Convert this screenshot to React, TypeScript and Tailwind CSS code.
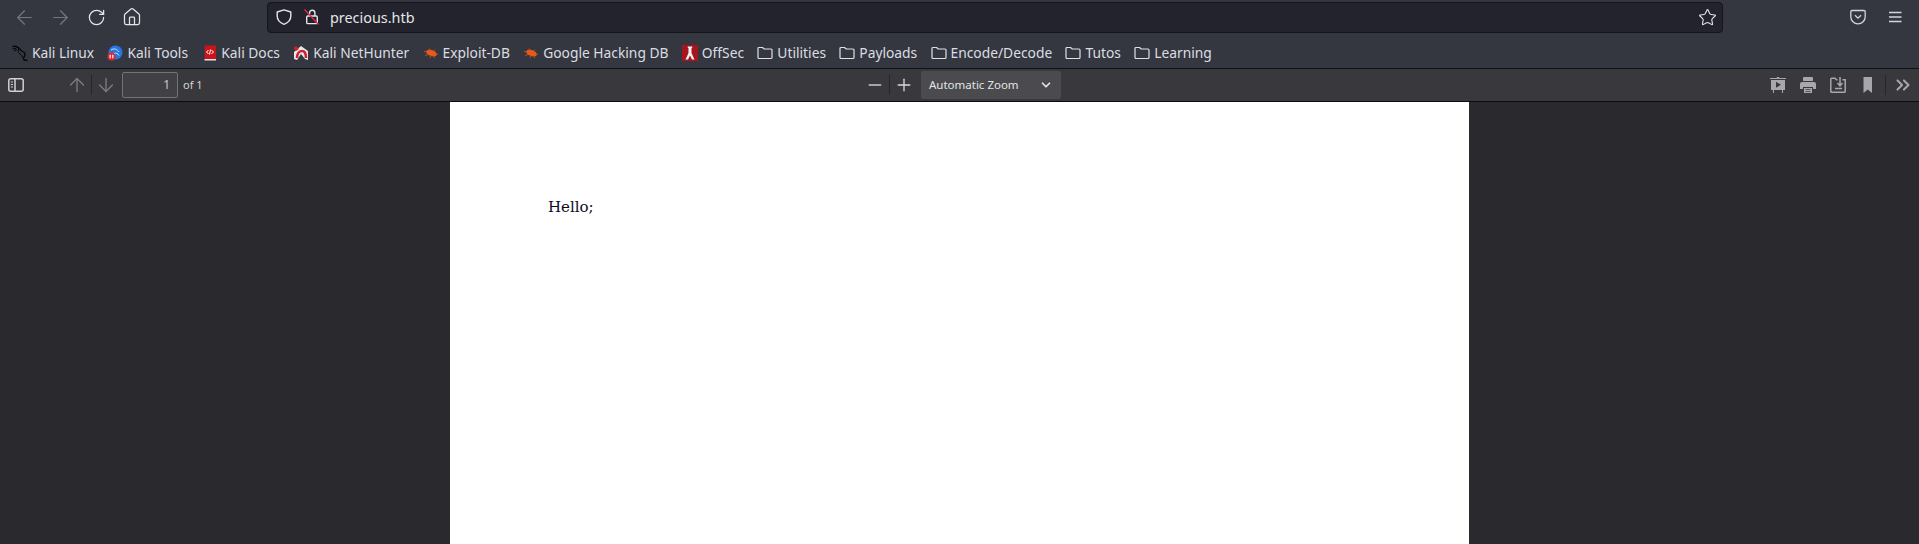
import { ArrowLeft, ArrowRight, ArrowUp, ArrowDown, RotateCw, Home, Star, Minus, Plus, ChevronDown, ChevronsRight } from 'lucide-react'

function ShieldIcon() {
  return (
    <svg width="16" height="16" viewBox="0 0 16 16" fill="none" className="shrink-0">
      <path d="M8 0.800 14.800 3v4c0 3.800-2.800 6.800-6.800 8.300C4 13.800 1.200 10.800 1.200 7V3Z" stroke="#e5e5e8" strokeWidth="1.400" strokeLinejoin="round" />
    </svg>
  )
}

function LockOff() {
  return (
    <svg width="16" height="16" viewBox="0 0 16 16" fill="none" className="shrink-0">
      <path d="M5.500 7V4a2.700 2.700 0 0 1 5.400 0v3" stroke="#e5e5e8" strokeWidth="1.400" />
      <rect x="2.700" y="7" width="10.600" height="7.600" rx="1.200" stroke="#e5e5e8" strokeWidth="1.400" />
      <path d="M0.500 0.500 14.500 15.500" stroke="#e22850" strokeWidth="1.300" />
    </svg>
  )
}

function Pocket() {
  return (
    <svg width="16" height="16" viewBox="0 0 16 16" fill="none">
      <path d="M2 1.500h12a1.200 1.200 0 0 1 1.200 1.200v5a7.200 7.200 0 0 1-14.400 0v-5A1.200 1.200 0 0 1 2 1.500Z" stroke="#d4d5d8" strokeWidth="1.300" />
      <path d="m5 6.200 3 3 3-3" stroke="#d4d5d8" strokeWidth="1.300" />
    </svg>
  )
}

function MenuIcon() {
  return (
    <svg width="16" height="16" viewBox="0 0 16 16" fill="none">
      <path d="M2 3.500h12.500M2 8h12.500M2 12.500h12.500" stroke="#d4d5d8" strokeWidth="1.300" />
    </svg>
  )
}

function FolderIcon() {
  return (
    <svg width="16" height="16" viewBox="0 0 16 16" fill="none">
      <path d="M1 3.500a1 1 0 0 1 1-1h3.500L7.300 4H14a1 1 0 0 1 1 1v7.500a1 1 0 0 1-1 1H2a1 1 0 0 1-1-1Z" stroke="#e0e1e4" strokeWidth="1.200" strokeLinejoin="round" />
    </svg>
  )
}

function Dragon() {
  return (
    <svg width="16" height="16" viewBox="0 0 16 16" fill="none">
      <path d="M0.500 1.500c3-.8 5 .2 6.500 1.700S9 6 10.500 6.500 13.500 8 13 10s-2 2.500-1.500 4 2.500 1.500 4 1.500" stroke="#050505" strokeWidth="1.300" />
      <path d="M0.500 4 4 3.500M2 6l3-1.500M7 3.500c-1.500 2-1 4 1 5.500s2.500 2 2 3.500" stroke="#050505" strokeWidth="1" />
    </svg>
  )
}

function KaliTools() {
  return (
    <svg width="16" height="16" viewBox="0 0 16 16" fill="none">
      <circle cx="8.500" cy="7.500" r="7" fill="#2777e0" />
      <path d="M4 5c3-2 6-1 8 2M7 8.500c2-1 4 0 5 2" stroke="#cfe3ff" strokeWidth="1" />
      <circle cx="4.500" cy="11.500" r="4" fill="#e0252f" />
      <path d="M3.200 9.800v3.400M5.800 9.800v3.400" stroke="#fff" strokeWidth="1.200" />
    </svg>
  )
}

function KaliDocs() {
  return (
    <svg width="16" height="16" viewBox="0 0 16 16" fill="none">
      <rect x="2" y="0.500" width="2" height="15" fill="#26345c" />
      <rect x="3.500" y="0.500" width="11.500" height="13.500" fill="#cc1418" />
      <rect x="3.500" y="14" width="11.500" height="1.500" fill="#e8e8e8" />
      <path d="m7.500 5-2 2 2 2M10.500 5l2 2-2 2M9.500 4.500 8.500 9.500" stroke="#fff" strokeWidth="1" />
    </svg>
  )
}

function NetHunter() {
  return (
    <svg width="16" height="16" viewBox="0 0 16 16" fill="none">
      <path d="M1 7 8 1l7 5v9l-3-1-4-5-4 6-3-1Z" fill="#e8e8ea" />
      <path d="M4 13c0-4 2-7 5-7s4 3 4 7" stroke="#d2202f" strokeWidth="2.600" />
      <path d="M0.500 3 3 1l3 3-3 2Z" fill="#d2202f" />
    </svg>
  )
}

function Bug() {
  return (
    <svg width="16" height="16" viewBox="0 0 16 16" fill="none">
      <ellipse cx="8.500" cy="8" rx="5.500" ry="3" fill="#e8591c" transform="rotate(20 8.500 8)" />
      <path d="M1 6.500 4 7M2 10.500l3-1M6 3.500l1.500 2.500M12 4.500 10.500 6M7 13l1-2.500M12 13l-1.500-2.500M15 9.500l-2-.5" stroke="#c9501c" strokeWidth="0.900" />
    </svg>
  )
}

function OffSec() {
  return (
    <svg width="16" height="16" viewBox="0 0 16 16" fill="none">
      <rect width="16" height="16" fill="#a8141c" />
      <path d="M5.800 1.500h4.400V3h-.7v5l3 6.500H10L8 10.500 6 14.500H3.500l3-6.500V3h-.7Z" fill="#f2f2f2" />
    </svg>
  )
}

function SidebarToggle() {
  return (
    <svg width="16" height="16" viewBox="0 0 16 16" fill="none">
      <rect x="0.800" y="1.800" width="14.400" height="12.400" rx="2" stroke="#d0d0d2" strokeWidth="1.500" />
      <path d="M7 2v12" stroke="#d0d0d2" strokeWidth="1.500" />
      <path d="M2.800 5H5M2.800 7.500H5M2.800 10H5" stroke="#d0d0d2" strokeWidth="1.100" />
    </svg>
  )
}

function Presentation() {
  return (
    <svg width="16" height="16" viewBox="0 0 16 16" fill="#a8a8aa">
      <rect y="1" width="16" height="1" />
      <rect x="6.800" y="0" width="2.400" height="1" />
      <path d="M1 3h14v10H1Zm5 1.800v6l5-3Z" fillRule="evenodd" />
      <rect x="3" y="13" width="1" height="3" />
      <rect x="12" y="13" width="1" height="3" />
    </svg>
  )
}

function Printer() {
  return (
    <svg width="16" height="16" viewBox="0 0 16 16" fill="#a8a8aa">
      <path d="M4 0h8a1 1 0 0 1 1 1v3H3V1a1 1 0 0 1 1-1Z" />
      <path d="M2 5h12a2 2 0 0 1 2 2v5h-3v-2H3v2H0V7a2 2 0 0 1 2-2Z" />
      <path d="M4 11h8v5H4Zm1.500 1.300v.8h5v-.8Zm0 1.700v.8h5V14Z" fillRule="evenodd" />
    </svg>
  )
}

function OpenFile() {
  return (
    <svg width="16" height="16" viewBox="0 0 16 16" fill="none">
      <path d="M12.500 2.800h2.700v11.600a.8.800 0 0 1-.8.800H1.600a.8.800 0 0 1-.8-.800V2a.8.800 0 0 1 .8-.8H5l1.500 1.600h1" stroke="#a8a8aa" strokeWidth="1.500" />
      <path d="M10 0v8M7.500 6 10 8.800 12.500 6" stroke="#a8a8aa" strokeWidth="1.500" />
      <path d="M5 11.500h7" stroke="#a8a8aa" strokeWidth="1.500" />
    </svg>
  )
}

function Bookmark() {
  return (
    <svg width="16" height="16" viewBox="0 0 16 16" fill="#a8a8aa">
      <path d="M3.500 0h8.500v16L7.800 12.500 3.500 16Z" />
    </svg>
  )
}

const bookmarks = [
  { label: 'Kali Linux', icon: <Dragon /> },
  { label: 'Kali Tools', icon: <KaliTools /> },
  { label: 'Kali Docs', icon: <KaliDocs /> },
  { label: 'Kali NetHunter', icon: <NetHunter /> },
  { label: 'Exploit-DB', icon: <Bug /> },
  { label: 'Google Hacking DB', icon: <Bug /> },
  { label: 'OffSec', icon: <OffSec /> },
  { label: 'Utilities', icon: <FolderIcon /> },
  { label: 'Payloads', icon: <FolderIcon /> },
  { label: 'Encode/Decode', icon: <FolderIcon /> },
  { label: 'Tutos', icon: <FolderIcon /> },
  { label: 'Learning', icon: <FolderIcon /> },
]

export default function App() {
  return (
    <div className="h-[544px] overflow-hidden flex flex-col bg-[#2a2a2e] font-['Noto_Sans',sans-serif]">
      {/* nav bar */}
      <div className="h-[34px] shrink-0 flex items-center bg-[#343740] pl-1.5">
        <div className="flex items-center w-[261px]">
          <div className="w-9 flex justify-center">
            <ArrowLeft size={23} strokeWidth={1.300} color="#73767d" />
          </div>
          <div className="w-9 flex justify-center">
            <ArrowRight size={23} strokeWidth={1.300} color="#73767d" />
          </div>
          <div className="w-9 flex justify-center">
            <RotateCw size={19} strokeWidth={1.600} color="#e5e5e8" />
          </div>
          <div className="w-9 flex justify-center">
            <Home size={20} strokeWidth={1.500} color="#e5e5e8" />
          </div>
        </div>
        <div className="w-[1456px] h-[31px] flex items-center rounded-[4px] border border-[#14151a] bg-[#22232d] pl-[8px] pr-[5px]">
          <ShieldIcon />
          <div className="ml-3">
            <LockOff />
          </div>
          <span className="ml-[10px] pt-[2px] text-[14.400px] text-[#e5e5e8]">precious.htb</span>
          <Star size={19} strokeWidth={1.400} color="#e5e5e8" className="ml-auto" />
        </div>
        <div className="ml-auto flex items-center gap-[21px] pr-4">
          <Pocket />
          <MenuIcon />
        </div>
      </div>

      {/* bookmarks */}
      <div className="h-[35px] shrink-0 flex items-center gap-[13.300px] bg-[#343740] pl-3 pt-[4px] border-b border-[#101114]">
        {bookmarks.map((b) => (
          <div key={b.label} className="flex items-center gap-1">
            {b.icon}
            <span className="text-[13.800px] text-[#dcdde0] whitespace-nowrap">{b.label}</span>
          </div>
        ))}
      </div>

      {/* pdf toolbar */}
      <div className="h-[33px] shrink-0 grid grid-cols-3 items-center bg-[#38383d] border-b border-[#0c0c0d]">
        <div className="flex items-center pl-2">
          <SidebarToggle />
          <ArrowUp size={22} strokeWidth={1.500} color="#7c7c7f" className="ml-[42px]" />
          <div className="w-px h-5 bg-[#27272a] mx-[3px]" />
          <ArrowDown size={22} strokeWidth={1.500} color="#7c7c7f" />
          <div className="ml-[5px] w-[56px] h-[26px] flex items-center justify-end pr-[7px] rounded-[2px] border border-[#737373] bg-[#404045] text-[12px] text-[#c8c8ca]">
            1
          </div>
          <span className="ml-[5px] text-[11px] text-[#d4d4d6]">of 1</span>
        </div>
        <div className="flex items-center justify-center pl-[7px]">
          <Minus size={20} strokeWidth={1.600} color="#c9c9cb" />
          <div className="w-px h-5 bg-[#27272a] mx-[4px]" />
          <Plus size={20} strokeWidth={1.600} color="#d9d9db" />
          <div className="ml-[7px] w-[140px] h-[28px] flex items-center justify-between px-[8px] rounded-[2px] bg-[#4a4a4f] text-[11.500px] text-[#e4e4e6]">
            <span>Automatic Zoom</span>
            <ChevronDown size={14} strokeWidth={3} color="#e4e4e6" />
          </div>
        </div>
        <div className="flex items-center justify-end pr-[5px]">
          <Presentation />
          <div className="ml-[14px]">
            <Printer />
          </div>
          <div className="ml-[14px]">
            <OpenFile />
          </div>
          <div className="ml-[14px]">
            <Bookmark />
          </div>
          <div className="w-px h-5 bg-[#27272a] ml-[9px] mr-[6px]" />
          <ChevronsRight size={22} strokeWidth={2.200} color="#a8a8aa" />
        </div>
      </div>

      {/* viewer */}
      <div className="flex-1 flex justify-center">
        <div className="w-[1019px] bg-white pt-[95px] pl-[98px]">
          <p className="font-['DejaVu_Serif',serif] text-[15px] leading-[20px] text-[#0b0b22]">Hello;</p>
        </div>
      </div>
    </div>
  )
}
